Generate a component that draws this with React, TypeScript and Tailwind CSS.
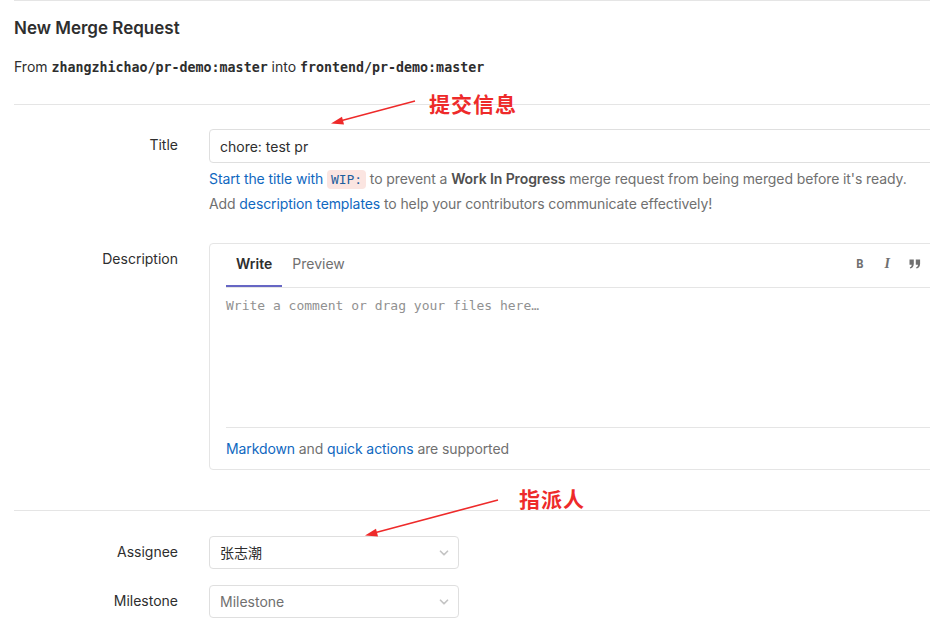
import { ChevronDown } from 'lucide-react'

const sans = { fontFamily: 'Inter, "Noto Sans CJK SC", sans-serif' }
const mono = { fontFamily: '"DejaVu Sans Mono", monospace' }

function FieldLabel({ children }: { children: React.ReactNode }) {
  return <div className="w-[164px] shrink-0 text-right pt-[6px] leading-[20px] text-[14px] text-[#2e2e2e]">{children}</div>
}

function Select({ value, placeholder }: { value?: string; placeholder?: boolean }) {
  return (
    <div className="w-[250px] h-[33px] ml-[31px] flex items-center justify-between pl-[10px] pr-[7px] border border-[#dfdfdf] rounded-[4px] bg-white">
      <span className={`text-[14px] ${placeholder ? 'text-[#707070]' : 'text-[#2e2e2e]'}`}>{value}</span>
      <ChevronDown size={14} strokeWidth={3} className="text-[#c4c4c4]" />
    </div>
  )
}

export default function App() {
  return (
    <div className="relative w-[930px] h-[625px] overflow-hidden bg-white text-[#2e2e2e]" style={sans}>
      <div className="ml-[14px] w-[1000px]">
        <div className="h-px bg-[#e5e5e5]" />

        {/* Header */}
        <h3 className="mt-[17px] h-[20px] text-[17px] leading-[20px] font-semibold text-[#2e2e2e]">New Merge Request</h3>
        <p className="mt-[19px] h-[20px] text-[14px] leading-[20px]">
          From{' '}
          <code className="font-bold text-[13.3px] leading-none" style={mono}>zhangzhichao/pr-demo:master</code>
          {' '}into{' '}
          <code className="font-bold text-[13.3px] leading-none" style={mono}>frontend/pr-demo:master</code>
        </p>
        <div className="mt-[27px] h-px bg-[#e5e5e5]" />

        {/* Title */}
        <div className="mt-[24px] flex">
          <FieldLabel>Title</FieldLabel>
          <div className="ml-[31px] flex-1">
            <div className="h-[34px] flex items-center px-[10px] border border-[#dfdfdf] rounded-[4px] text-[14px] text-[#2e2e2e]">chore: test pr</div>
            <div className="mt-[3px] text-[14px] leading-[25px] tracking-[-0.1px] text-[#707070]">
              <p className="h-[25px]">
                <span className="text-[#1068bf]">Start the title with </span>
                <code className="px-[4px] py-[2px] rounded-[4px] bg-[#fbe5e1] text-[#1f5f9e] text-[13px] leading-none" style={mono}>WIP:</code>
                {' '}to prevent a <strong className="font-semibold text-[#505050]">Work In Progress</strong> merge request from being merged before it's ready.
              </p>
              <p className="h-[25px]">
                Add <span className="text-[#1068bf]">description templates</span> to help your contributors communicate effectively!
              </p>
            </div>
          </div>
        </div>

        {/* Description */}
        <div className="mt-[27px] flex">
          <FieldLabel>Description</FieldLabel>
          <div className="ml-[31px] flex-1 border border-[#e5e5e5] rounded-[4px]">
            <div className="h-[44px] ml-[16px] flex border-b border-[#e5e5e5]">
              <div className="h-full px-[10px] pb-[2px] flex items-center border-b-2 border-[#6666c4] text-[14px] font-semibold text-[#2e2e2e]">Write</div>
              <div className="h-full px-[10px] pb-[4px] flex items-center text-[14px] text-[#707070]">Preview</div>
              <div className="ml-[491px] pb-[4px] flex items-center">
                <span className="w-[28px] text-center text-[12px] font-bold text-[#707070]" style={mono}>B</span>
                <span className="w-[27px] text-center text-[14px] italic font-bold text-[#707070]" style={{ fontFamily: '"Liberation Serif", serif' }}>I</span>
                <span className="w-[28px] flex justify-center">
                  <svg width="12" height="12" viewBox="0 0 12 12" fill="#707070">
                    <path d="M0.5 1.5h4.3v4.3c0 2.6-1.3 4.3-3.6 4.8l-0.4-1.3c1.2-0.4 1.8-1.3 1.9-2.6H0.5z" />
                    <path d="M6.8 1.5h4.3v4.3c0 2.6-1.3 4.3-3.6 4.8l-0.4-1.3c1.2-0.4 1.8-1.3 1.9-2.6H6.8z" />
                  </svg>
                </span>
              </div>
            </div>
            <div className="h-[139px] px-[16px] pt-[8px]">
              <p className="text-[13px] leading-[20px] text-[#919191]" style={mono}>Write a comment or drag your files here…</p>
            </div>
            <div className="h-[42px] ml-[16px] flex items-center border-t border-[#e5e5e5] text-[14px] tracking-[-0.1px] text-[#707070]">
              <span className="text-[#1068bf]">Markdown</span>&nbsp;and&nbsp;<span className="text-[#1068bf]">quick actions</span>&nbsp;are supported
            </div>
          </div>
        </div>

        <div className="mt-[40px] h-px bg-[#e5e5e5]" />

        {/* Assignee / milestone */}
        <div className="mt-[25px] flex">
          <FieldLabel>Assignee</FieldLabel>
          <Select value="张志潮" />
        </div>
        <div className="mt-[16px] flex">
          <FieldLabel>Milestone</FieldLabel>
          <Select value="Milestone" placeholder />
        </div>
      </div>

      {/* Annotations */}
      <svg className="absolute inset-0 pointer-events-none" width="930" height="625">
        <line x1="415" y1="101" x2="340" y2="121" stroke="#ee2a2a" strokeWidth="1.6" />
        <polygon points="331,123.5 342,116.8 344,124.5" fill="#ee2a2a" />
        <line x1="498" y1="500" x2="374" y2="533" stroke="#ee2a2a" strokeWidth="1.6" />
        <polygon points="365,535.5 376,528.8 378,536.5" fill="#ee2a2a" />
      </svg>
      <div className="absolute left-[429px] top-[89px] text-[21px] leading-[28px] font-bold text-[#ee2a2a] tracking-[1px]" style={{ fontFamily: '"Noto Sans CJK SC", sans-serif' }}>提交信息</div>
      <div className="absolute left-[519px] top-[484px] text-[21px] leading-[28px] font-bold text-[#ee2a2a] tracking-[1px]" style={{ fontFamily: '"Noto Sans CJK SC", sans-serif' }}>指派人</div>
    </div>
  )
}
